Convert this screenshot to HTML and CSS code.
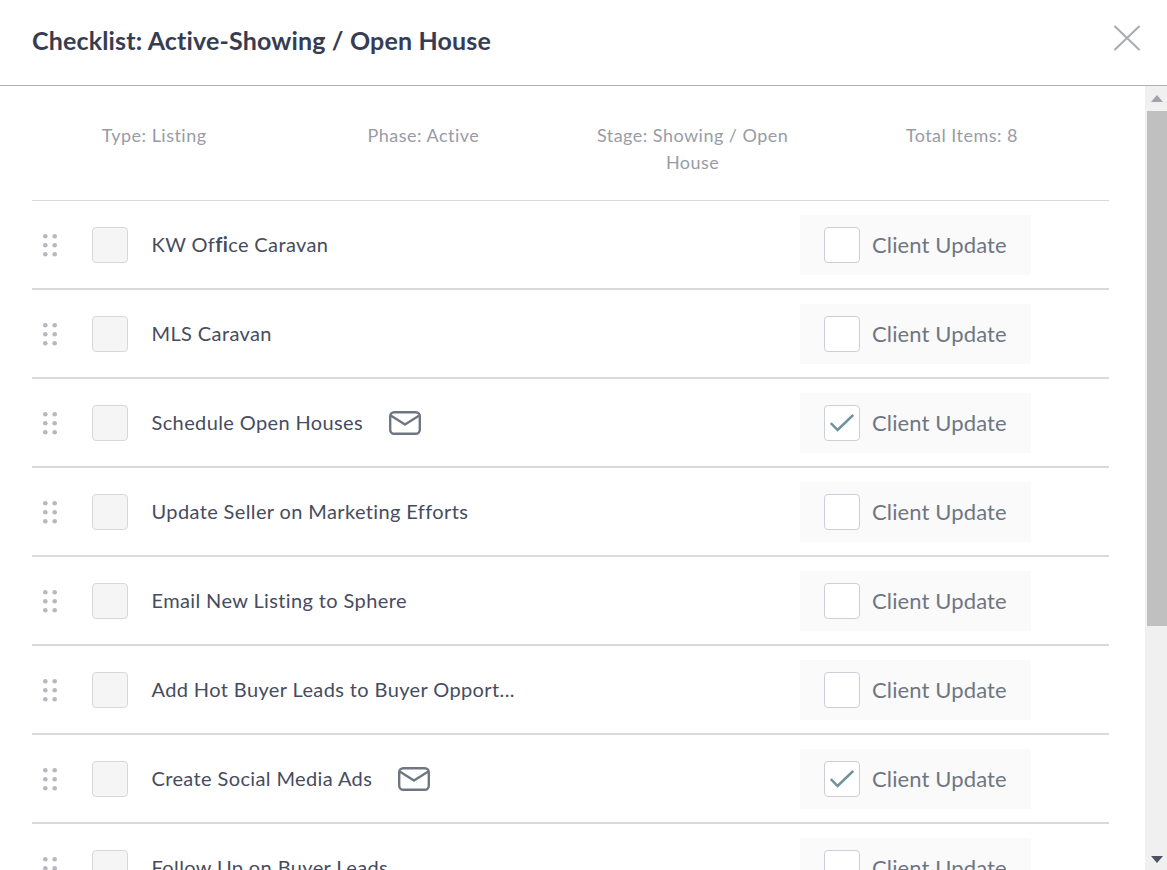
FILE: index.html
```html
<!DOCTYPE html>
<html lang="en">
<head>
<meta charset="utf-8">
<title>Checklist</title>
<link rel="stylesheet" href="styles.css">
</head>
<body>
<svg class="sprites" width="0" height="0" aria-hidden="true">
  <symbol id="drag" viewBox="0 0 14 23"><g fill="#b6b8be"><circle cx="2.3" cy="2.3" r="2.3"/><circle cx="11.7" cy="2.3" r="2.3"/><circle cx="2.3" cy="11.3" r="2.3"/><circle cx="11.7" cy="11.3" r="2.3"/><circle cx="2.3" cy="20.3" r="2.3"/><circle cx="11.7" cy="20.3" r="2.3"/></g></symbol>
  <symbol id="mail" viewBox="0 0 32 24"><rect x="1.2" y="1.2" width="29.6" height="21.6" rx="4" fill="none" stroke="#6f7683" stroke-width="2.4"/><path d="M2.5 5 L16 13.5 L29.5 5" fill="none" stroke="#6f7683" stroke-width="2.4" stroke-linecap="round" stroke-linejoin="round"/></symbol>
  <symbol id="tick" viewBox="0 0 24 18"><path d="M0.8 9 L7.6 16 L23.2 1" fill="none" stroke="#6f929c" stroke-width="2.5"/></symbol>
</svg>
<div class="modal">
  <header class="modal-head">
    <h1 class="modal-title">Checklist: Active-Showing / Open House</h1>
    <button class="close" aria-label="Close"><svg width="28" height="26" viewBox="0 0 28 26"><path d="M2 1.5 L26 24.5 M26 1.5 L2 24.5" stroke="#a9abb3" stroke-width="2" stroke-linecap="round"/></svg></button>
  </header>
  <div class="modal-body">
    <main class="content">
      <section class="meta">
        <div class="meta-col">Type: Listing</div>
        <div class="meta-col">Phase: Active</div>
        <div class="meta-col">Stage: Showing / Open House</div>
        <div class="meta-col">Total Items: 8</div>
      </section>
      <ul class="list">
        <li class="row">
          <svg class="drag"><use href="#drag"/></svg><span class="box"></span>
          <span class="name">KW Of<span class="lig">fi</span>ce Caravan</span>
          <label class="update"><span class="check"></span><span class="update-label">Client Update</span></label>
        </li>
        <li class="row">
          <svg class="drag"><use href="#drag"/></svg><span class="box"></span>
          <span class="name">MLS Caravan</span>
          <label class="update"><span class="check"></span><span class="update-label">Client Update</span></label>
        </li>
        <li class="row">
          <svg class="drag"><use href="#drag"/></svg><span class="box"></span>
          <span class="name">Schedule Open Houses</span><svg class="mail"><use href="#mail"/></svg>
          <label class="update"><span class="check"><svg class="tick"><use href="#tick"/></svg></span><span class="update-label">Client Update</span></label>
        </li>
        <li class="row">
          <svg class="drag"><use href="#drag"/></svg><span class="box"></span>
          <span class="name">Update Seller on Marketing Efforts</span>
          <label class="update"><span class="check"></span><span class="update-label">Client Update</span></label>
        </li>
        <li class="row">
          <svg class="drag"><use href="#drag"/></svg><span class="box"></span>
          <span class="name">Email New Listing to Sphere</span>
          <label class="update"><span class="check"></span><span class="update-label">Client Update</span></label>
        </li>
        <li class="row">
          <svg class="drag"><use href="#drag"/></svg><span class="box"></span>
          <span class="name">Add Hot Buyer Leads to Buyer Opport...</span>
          <label class="update"><span class="check"></span><span class="update-label">Client Update</span></label>
        </li>
        <li class="row">
          <svg class="drag"><use href="#drag"/></svg><span class="box"></span>
          <span class="name">Create Social Media Ads</span><svg class="mail"><use href="#mail"/></svg>
          <label class="update"><span class="check"><svg class="tick"><use href="#tick"/></svg></span><span class="update-label">Client Update</span></label>
        </li>
        <li class="row">
          <svg class="drag"><use href="#drag"/></svg><span class="box"></span>
          <span class="name">Follow Up on Buyer Leads</span>
          <label class="update"><span class="check"></span><span class="update-label">Client Update</span></label>
        </li>
      </ul>
    </main>
    <div class="scrollbar" aria-hidden="true">
      <span class="arrow arrow-up"></span>
      <span class="thumb"></span>
      <span class="arrow arrow-down"></span>
    </div>
  </div>
</div>
</body>
</html>
```
FILE: styles.css
```css
* { box-sizing: border-box; }
html, body { margin: 0; height: 100%; overflow: hidden; background: #fff; }
body { font-family: "Lato", "Open Sans", sans-serif; color: #464c5e; }
.sprites { display: block; height: 0; }
.modal { height: 870px; display: flex; flex-direction: column; }
.modal-head { height: 86px; flex: none; border-bottom: 1px solid #b0b0b6; padding: 0 26px 0 32px; display: flex; align-items: center; justify-content: space-between; }
.modal-title { margin: 0 0 5px; font-size: 25px; font-weight: 700; color: #363d52; letter-spacing: 0.16px; }
.close { border: 0; background: none; padding: 0; margin-bottom: 10px; display: flex; }
.modal-body { flex: 1; min-height: 0; display: flex; }
.content { flex: 1; min-width: 0; overflow: hidden; padding: 0 36px 0 32px; }
.meta { display: grid; grid-template-columns: repeat(4, 1fr); padding-top: 36px; height: 115px; border-bottom: 1px solid #d9d9dc; margin: 0; }
.meta-col { padding: 0 45px 0 20px; text-align: center; font-size: 18px; line-height: 27px; color: #989ca6; letter-spacing: 0.48px; }
.list { list-style: none; margin: 0; padding: 0; }
.row { height: 89px; padding: 14px 78px 13px 11px; border-bottom: 2px solid #d9d9de; display: flex; align-items: center; }
.drag { width: 14px; height: 23px; flex: none; margin-right: 35px; }
.box { width: 36px; height: 36px; flex: none; background: #f5f5f5; border: 1px solid #d8d8dc; border-radius: 4px; margin-right: 24px; }
.name { font-size: 20px; letter-spacing: 0.38px; white-space: nowrap; margin: 0 0 2px -0.5px; }
.lig { font-weight: 700; }
.mail { width: 32px; height: 24px; flex: none; margin-left: 26px; }
.update { margin-left: auto; width: 231px; height: 60px; flex: none; background: #fafafa; padding-left: 24px; display: flex; align-items: center; gap: 12px; }
.check { width: 36px; height: 36px; flex: none; background: #fff; border: 1px solid #ccd0d6; border-radius: 4px; display: flex; align-items: center; justify-content: center; }
.tick { width: 24px; height: 18px; display: block; }
.update-label { font-size: 22px; color: #6f7683; letter-spacing: 0.12px; white-space: nowrap; margin-bottom: 2px; }
.scrollbar { width: 22px; flex: none; background: #f0f0f0; display: flex; flex-direction: column; align-items: flex-end; position: relative; padding-top: 25px; }
.thumb { width: 20px; height: 515px; background: #bfc0bf; }
.arrow { position: absolute; right: 4px; width: 0; height: 0; border-left: 6px solid transparent; border-right: 6px solid transparent; }
.arrow-up { top: 9px; border-bottom: 7px solid #a0a3ad; }
.arrow-down { bottom: 7px; border-top: 7px solid #4c5260; }
```
